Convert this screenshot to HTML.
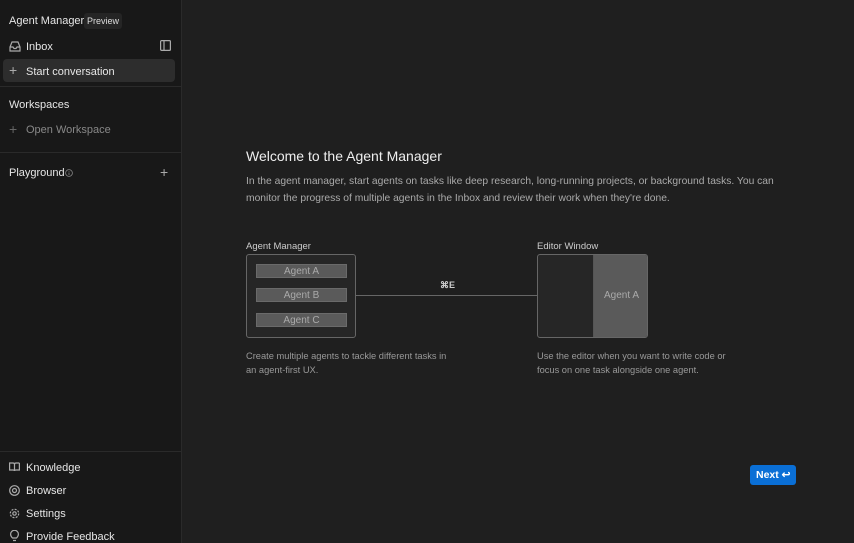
<!DOCTYPE html>
<html><head><style>
*{margin:0;padding:0;box-sizing:border-box}
body{width:854px;height:543px;background:#1f1f1f;font-family:"Liberation Sans",sans-serif;color:#ddd;position:relative;overflow:hidden}
.sb{position:absolute;left:0;top:0;width:182px;height:543px;background:#181818;border-right:1px solid #2a2a2a}
.t{position:absolute;font-size:11px;white-space:nowrap}
.ic{position:absolute;stroke:#aaa;fill:none;stroke-width:1.2}
.hr{position:absolute;left:0;width:181px;height:1px;background:#2a2a2a}
.m{position:absolute;white-space:nowrap}
.ag{position:absolute;left:9px;width:91px;height:14px;background:#5a5a5a;border:1px solid #6a6a6a;color:#aaa;font-size:10px;text-align:center;line-height:13px}
</style></head><body>
<div class="sb">
<div class="t" style="left:9px;top:15px;font-size:11px;color:#e6e6e6">Agent Manager</div>
<div class="t" style="left:84px;top:13px;background:#252525;border-radius:3px;padding:1px 3px;font-size:9px;color:#ddd;line-height:14px">Preview</div>
<svg class="ic" style="left:9px;top:41px" width="12" height="11" viewBox="0 0 12 11"><path d="M1 6 L3 1 H9 L11 6 V10 H1 Z M1 6 H4 L5 7.5 H7 L8 6 H11"/></svg>
<div class="t" style="left:26px;top:41px;color:#e6e6e6">Inbox</div>
<svg class="ic" style="left:160px;top:40px" width="11" height="11"><rect x="0.6" y="0.6" width="9.8" height="9.8" rx="1"/><path d="M4 1 V10"/></svg>
<div style="position:absolute;left:3px;top:59px;width:172px;height:23px;background:#2d2d2d;border-radius:4px"></div>
<div class="t" style="left:9px;top:62px;color:#aaa;font-size:14px">+</div>
<div class="t" style="left:26px;top:66px;color:#e6e6e6">Start conversation</div>
<div class="hr" style="top:86px"></div>
<div class="t" style="left:9px;top:99px;color:#e6e6e6;font-size:11px">Workspaces</div>
<div class="t" style="left:9px;top:121px;color:#666;font-size:14px">+</div>
<div class="t" style="left:26px;top:124px;color:#888">Open Workspace</div>
<div class="hr" style="top:152px"></div>
<div class="t" style="left:9px;top:167px;color:#e6e6e6;font-size:11px">Playground</div>
<svg class="ic" style="left:65px;top:169px;stroke:#888;stroke-width:0.8" width="8" height="8"><circle cx="4" cy="4" r="3.4"/><path d="M4 3.5V6M4 2V2.6"/></svg>
<div class="t" style="left:160px;top:164px;color:#aaa;font-size:14px">+</div>
<div class="hr" style="top:451px"></div>
<svg class="ic" style="left:9px;top:462px" width="11" height="10"><path d="M0.6 1 H4 Q5.5 1 5.5 2.5 V9 Q5.5 8 4 8 H0.6 Z M10.4 1 H7 Q5.5 1 5.5 2.5 M10.4 1 V8 H7 Q5.5 8 5.5 9"/></svg>
<div class="t" style="left:26px;top:462px;color:#e6e6e6">Knowledge</div>
<svg class="ic" style="left:9px;top:485px" width="11" height="11"><circle cx="5.5" cy="5.5" r="4.8"/><circle cx="5.5" cy="5.5" r="2"/></svg>
<div class="t" style="left:26px;top:485px;color:#e6e6e6">Browser</div>
<svg class="ic" style="left:9px;top:508px" width="11" height="11"><circle cx="5.5" cy="5.5" r="4.2" stroke-dasharray="2 1.3"/><circle cx="5.5" cy="5.5" r="1.7"/></svg>
<div class="t" style="left:26px;top:508px;color:#e6e6e6">Settings</div>
<svg class="ic" style="left:10px;top:530px" width="9" height="13"><path d="M2.5 8 Q0.6 6 0.6 4.2 A3.9 3.9 0 0 1 8.4 4.2 Q8.4 6 6.5 8 Z M3 10.5H6"/></svg>
<div class="t" style="left:26px;top:531px;color:#e6e6e6">Provide Feedback</div>
</div>

<div class="m" style="left:246px;top:148px;font-size:14px;color:#eee">Welcome to the Agent Manager</div>
<div class="m" style="left:246px;top:174px;font-size:10.3px;color:#aaa;line-height:16.5px">In the agent manager, start agents on tasks like deep research, long-running projects, or background tasks. You can<br>monitor the progress of multiple agents in the Inbox and review their work when they're done.</div>

<div class="m" style="left:246px;top:241px;font-size:9.5px;color:#ccc">Agent Manager</div>
<div style="position:absolute;left:246px;top:254px;width:110px;height:84px;border:1px solid #666;border-radius:3px;background:#262626">
<div class="ag" style="top:9px">Agent A</div>
<div class="ag" style="top:33px">Agent B</div>
<div class="ag" style="top:58px">Agent C</div>
</div>
<div style="position:absolute;left:356px;top:295px;width:181px;height:1px;background:#666"></div>
<div class="m" style="left:440px;top:280px;font-size:9px;color:#ccc;font-weight:bold">⌘E</div>
<div class="m" style="left:537px;top:241px;font-size:9.5px;color:#ccc">Editor Window</div>
<div style="position:absolute;left:537px;top:254px;width:111px;height:84px;border:1px solid #666;border-radius:3px;background:#262626;overflow:hidden">
<div style="position:absolute;left:55px;top:0;width:56px;height:84px;background:#5a5a5a;border-left:1px solid #555;color:#aaa;font-size:10px;text-align:center;line-height:82px">Agent A</div>
</div>
<div class="m" style="left:246px;top:349px;font-size:9.3px;color:#999;line-height:14px">Create multiple agents to tackle different tasks in<br>an agent-first UX.</div>
<div class="m" style="left:537px;top:349px;font-size:9.3px;color:#999;line-height:14px">Use the editor when you want to write code or<br>focus on one task alongside one agent.</div>

<div style="position:absolute;left:750px;top:465px;width:46px;height:20px;background:#0a6fd6;border-radius:3px;color:#fff;font-size:10.5px;font-weight:bold;line-height:20px;padding-left:6px">Next ↩</div>
</body></html>
